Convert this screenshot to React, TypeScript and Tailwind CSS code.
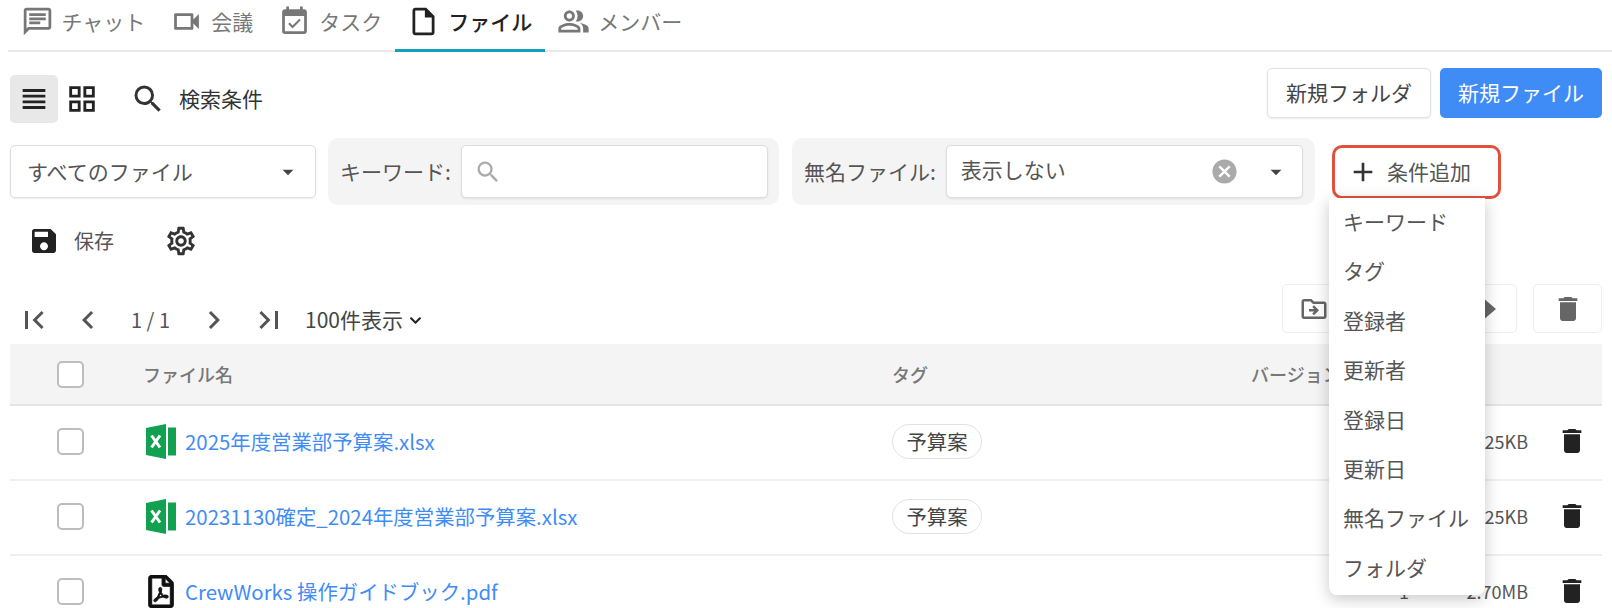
import {
  MdOutlineChat,
  MdOutlineVideocam,
  MdEventAvailable,
  MdOutlineInsertDriveFile,
  MdOutlinePeopleAlt,
  MdViewHeadline,
  MdOutlineGridView,
  MdSearch,
  MdArrowDropDown,
  MdCancel,
  MdAdd,
  MdSave,
  MdOutlineSettings,
  MdFirstPage,
  MdLastPage,
  MdChevronLeft,
  MdChevronRight,
  MdDelete,
  MdOutlineDriveFileMove,
} from "react-icons/md";
import { FaChevronDown, FaRegFilePdf } from "react-icons/fa";
import cn from "clsx";

const tabs = [
  { name: "チャット", icon: MdOutlineChat },
  { name: "会議", icon: MdOutlineVideocam },
  { name: "タスク", icon: MdEventAvailable },
  { name: "ファイル", icon: MdOutlineInsertDriveFile, active: true },
  { name: "メンバー", icon: MdOutlinePeopleAlt },
];

const menuItems = ["キーワード", "タグ", "登録者", "更新者", "登録日", "更新日", "無名ファイル", "フォルダ"];

const files = [
  { name: "2025年度営業部予算案.xlsx", type: "xlsx", tag: "予算案", version: "1", size: "25KB" },
  { name: "20231130確定_2024年度営業部予算案.xlsx", type: "xlsx", tag: "予算案", version: "1", size: "25KB" },
  { name: "CrewWorks 操作ガイドブック.pdf", type: "pdf", tag: "", version: "1", size: "2.70MB" },
];

const ExcelIcon = () => (
  <svg width="30" height="35" viewBox="0 0 30 35">
    <path d="M0 4 L20 0 V35 L0 31 Z" fill="#12a150" />
    <path d="M22 3.5 H30 V31.5 H22 Z" fill="#12a150" />
    <path d="M5.5 11.5 L14 23.5 M14 11.5 L5.5 23.5" stroke="#fff" strokeWidth="3" fill="none" />
  </svg>
);

const Checkbox = () => (
  <span className="block w-[27px] h-[27px] rounded-[5px] border-2 border-[#bdbdbd] bg-white" />
);

const App = () => {
  return (
    <div
      className="relative w-[1612px] h-[608px] overflow-hidden bg-white text-[21px] text-[#555]"
      style={{ fontFamily: '"Noto Sans CJK JP", "Open Sans", sans-serif' }}
    >
      <div className="ml-[8px] flex h-[52px] border-b-2 border-[#e8e8e8]">
        {tabs.map(({ name, icon: Icon, active }) => (
          <div
            key={name}
            className={cn("flex h-[52px] items-center gap-2 px-[12.5px] pb-[6px] border-b-[3px]", {
              "border-[#14a0bd] text-[#222] font-medium": active,
              "border-transparent text-[#777]": !active,
            })}
          >
            <Icon size={33} />
            <span>{name}</span>
          </div>
        ))}
      </div>

      <div className="px-[10px]">
        <div className="mt-[16px] flex h-[54px] items-start justify-between">
          <div className="mt-[7px] flex items-center">
            <div className="flex h-[48px] w-[48px] items-center justify-center rounded-[5px] bg-[#e8e8e8] text-[#222]">
              <MdViewHeadline size={34} />
            </div>
            <div className="ml-[7px] text-[#222]">
              <MdOutlineGridView size={34} />
            </div>
            <div className="ml-[31px] flex items-center gap-[13px] text-[#333]">
              <MdSearch size={36} />
              <span>検索条件</span>
            </div>
          </div>
          <div className="flex gap-[9px]">
            <button className="h-[50px] w-[164px] rounded-[5px] border border-[#e2e2e2] bg-white text-[#444] shadow-[0_1px_2px_rgba(0,0,0,0.08)]">
              新規フォルダ
            </button>
            <button className="h-[50px] w-[162px] rounded-[5px] bg-[#3f8cf7] text-white">新規ファイル</button>
          </div>
        </div>

        <div className="mt-[16px] flex h-[67px] items-center">
          <div className="flex h-[53px] w-[306px] items-center justify-between rounded-[5px] border border-[#ddd] pl-[16px] pr-[14px] shadow-[0_1px_2px_rgba(0,0,0,0.08)]">
            <span>すべてのファイル</span>
            <MdArrowDropDown size={26} className="text-[#444]" />
          </div>
          <div className="ml-[12px] flex h-[67px] w-[451px] items-center gap-[10px] rounded-[10px] bg-[#f4f4f4] pl-[12px] pr-[11px]">
            <span className="shrink-0 whitespace-nowrap">キーワード:</span>
            <div className="flex h-[53px] flex-1 items-center rounded-[5px] border border-[#ddd] bg-white px-[12px] shadow-[0_1px_2px_rgba(0,0,0,0.08)]">
              <MdSearch size={28} className="text-[#aaa]" />
            </div>
          </div>
          <div className="ml-[13px] flex h-[67px] w-[523px] items-center gap-[10px] rounded-[10px] bg-[#f4f4f4] pl-[12px] pr-[12px]">
            <span className="shrink-0 whitespace-nowrap">無名ファイル:</span>
            <div className="flex h-[53px] flex-1 items-center rounded-[5px] border border-[#ddd] bg-white pl-[14px] pr-[13px] shadow-[0_1px_2px_rgba(0,0,0,0.08)]">
              <span className="flex-1 -mt-[4px]">表示しない</span>
              <MdCancel size={29} className="text-[#aaa]" />
              <MdArrowDropDown size={26} className="ml-[24px] text-[#444]" />
            </div>
          </div>
          <div className="ml-[17px] flex h-[54px] w-[169px] items-center gap-[8px] rounded-[10px] border-[3px] border-[#e2513c] pl-[12px]">
            <MdAdd size={32} className="text-[#333]" />
            <span>条件追加</span>
          </div>
        </div>

        <div className="mt-[10px] flex h-[52px] items-center pl-[18px]">
          <MdSave size={32} className="text-[#222]" />
          <span className="ml-[14px] text-[#555] text-[20px]">保存</span>
          <MdOutlineSettings size={34} className="ml-[50px] text-[#333]" />
        </div>

        <div className="mt-[17px] flex h-[49px] items-start justify-between">
          <div className="mt-[18px] flex items-center text-[#555]">
            <MdFirstPage size={36} className="ml-[6px]" />
            <MdChevronLeft size={36} className="ml-[18px]" />
            <span className="ml-[25px] w-[50px] text-[20px]">1 / 1</span>
            <MdChevronRight size={36} className="ml-[15px]" />
            <MdLastPage size={36} className="ml-[19px]" />
            <span className="ml-[18px] text-[#444]">100件表示</span>
            <FaChevronDown size={13} className="ml-[6px] text-[#222]" />
          </div>
          <div className="flex gap-[16px]">
            <div className="flex h-[49px] w-[235px] items-center justify-between rounded-[5px] border border-[#eee] pl-[16px] pr-[20px] text-[#666]">
              <MdOutlineDriveFileMove size={30} />
              <svg width="14" height="24" viewBox="0 0 14 24">
                <path d="M0 0 L14 12 L0 24 Z" fill="currentColor" />
              </svg>
            </div>
            <div className="flex h-[49px] w-[69px] items-center justify-center rounded-[5px] border border-[#eee] text-[#666]">
              <MdDelete size={32} />
            </div>
          </div>
        </div>

        <div className="mt-[11px] flex h-[62px] items-center border-b-2 border-[#e4e4e4] bg-[#f4f4f4] text-[18px] font-medium text-[#777]">
          <div className="ml-[47px] w-[86px]">
            <Checkbox />
          </div>
          <div className="w-[749px]">ファイル名</div>
          <div className="w-[359px]">タグ</div>
          <div>バージョン</div>
        </div>

        {files.map((file) => (
          <div key={file.name} className="flex h-[75px] items-center border-b-2 border-[#efefef] pb-[3px]">
            <div className="ml-[47px] w-[89px]">
              <Checkbox />
            </div>
            <div className="flex w-[746px] items-center gap-[9px] text-[20.4px] text-[#3f8cf7]">
              <span className="flex w-[30px] justify-center">
                {file.type === "xlsx" ? (
                  <ExcelIcon />
                ) : (
                  <FaRegFilePdf size={33} strokeWidth={14} className="text-[#111]" />
                )}
              </span>
              <span>{file.name}</span>
            </div>
            <div className="w-[507px]">
              {file.tag && (
                <span className="inline-flex h-[35px] w-[90px] items-center justify-center rounded-full border border-[#e2e2e2] text-[20.4px] text-[#444]">
                  {file.tag}
                </span>
              )}
            </div>
            <div className="w-[30px] text-[18px]">{file.version}</div>
            <div className="w-[99px] whitespace-nowrap text-right text-[18px]">{file.size}</div>
            <MdDelete size={32} className="ml-[28px] text-[#222]" />
          </div>
        ))}
      </div>

      <div className="absolute left-[1329px] top-[198px] w-[156px] rounded-b-[8px] bg-white pb-[2px] text-[21px] text-[#555] shadow-[0_4px_16px_rgba(0,0,0,0.22)]">
        {menuItems.map((item) => (
          <div key={item} className="flex h-[49.4px] items-center whitespace-nowrap pl-[14px] pb-[2px]">
            {item}
          </div>
        ))}
      </div>
    </div>
  );
};

export default App;
